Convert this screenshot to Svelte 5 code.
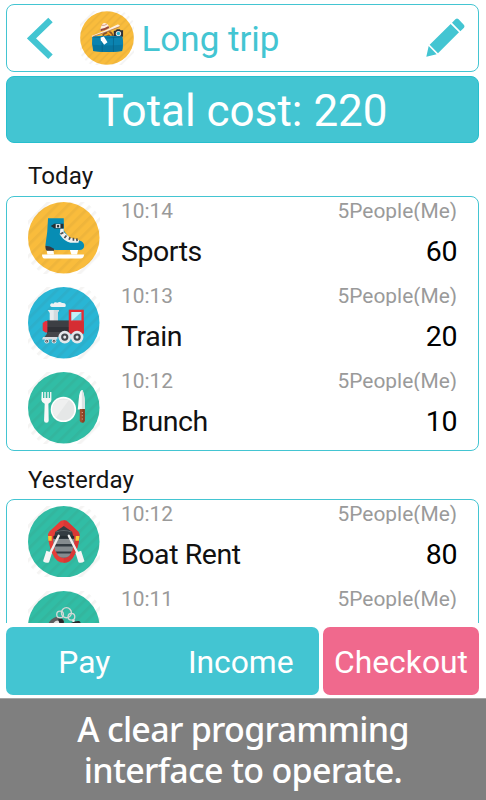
<script>
  const groups = [
    {
      day: 'Today',
      items: [
        { time: '10:14', name: 'Sports', cost: 60, icon: 'skate', color: '#f9bc3c' },
        { time: '10:13', name: 'Train', cost: 20, icon: 'train', color: '#29b6d5' },
        { time: '10:12', name: 'Brunch', cost: 10, icon: 'meal', color: '#31bda5' }
      ]
    },
    {
      day: 'Yesterday',
      items: [
        { time: '10:12', name: 'Boat Rent', cost: 80, icon: 'boat', color: '#31bda5' },
        { time: '10:11', icon: 'rings', color: '#31bda5' }
      ]
    }
  ];
</script>

<svg class="defs" width="0" height="0" aria-hidden="true">
  <defs>
    <pattern id="stripes" width="24" height="24" patternUnits="userSpaceOnUse" patternTransform="rotate(45)">
      <rect width="9" height="24" fill="#5a4a3a" opacity=".06" />
    </pattern>
    <pattern id="stripes-small" width="17" height="17" patternUnits="userSpaceOnUse" patternTransform="rotate(45)">
      <rect width="6" height="17" fill="#5a4a3a" opacity=".06" />
    </pattern>
  </defs>
</svg>

{#snippet art(kind)}
  {#if kind === 'skate'}
    <path d="M66 179h126q-1 12-11 12H73q-7-1-7-12z" fill="#fff" />
    <path d="M80 167h20l2 12H82zM149 165h25l-3 14h-17z" fill="#fff" />
    <path d="M84 71h47l1 38 18 22 28 6q14 4 14 16 0 12-14 13h-70q-21-3-32-14 7-39 8-81z" fill="#078db4" />
    <path d="M76 153q14 0 26 9v6H81q-5-1-5-15z" fill="#38393d" />
    <path d="M121 101h10v11l19 17 27 7-2 8h-24q-18-4-32-25z" fill="#f2f1ef" />
    <path d="M92 94l11-7h27v14h-27z" fill="#253035" />
    <rect x="107" y="88" width="14" height="12" fill="#dce2e4" />
    <rect x="111" y="91" width="6" height="7" fill="#253035" />
    <path d="M121 118l9-5M133 130l6-8M147 135l3-8M160 138v-9M171 139l-1-8" stroke="#4b5054" stroke-width="5" />
  {:else if kind === 'train'}
    <path d="M96 82q-8-1-5-8 3-5 9-2 4-7 12-3 7-5 14 1 11-1 11 7 1 5-7 5z" fill="#eef2f4" />
    <path d="M83 91h34l-4 9v24H89v-24z" fill="#e8ecef" />
    <path d="M101 91h16l-4 9v24h-12z" fill="#d4dade" />
    <rect x="81" y="122" width="67" height="39" fill="#3d3f44" />
    <rect x="81" y="142" width="67" height="19" fill="#303237" />
    <path d="M68 130l8-6h6v34h-6l-8-6z" fill="#e7303d" />
    <path d="M84 157h60v15H74z" fill="#46474b" />
    <path d="M69 172h43v7H66z" fill="#d9dde1" />
    <path d="M146 90h45v72h-45z" fill="#e52d35" />
    <path d="M154 97h30v25h-30z" fill="#62cbe2" /><path d="M154 97h30l-28 25h-2z" fill="#c4eff7" />
    <path d="M147 125h44v35h-44z" fill="#d52d33" />
    {#each [[134,172,19],[171,172,19],[80,184,7],[102,184,7]] as [x,y,r]}
      <circle cx={x} cy={y} {r} fill="#e4e8eb" />
      <circle cx={x} cy={y} r={r * .57} fill="#45494d" /><circle cx={x} cy={y} r={r * .24} fill="#e4e8eb" />
    {/each}
  {:else if kind === 'meal'}
    <path d="M65 82h4v18h4V82h4v18h5V82h4v18h4V82h4v24q-1 9-9 11l1 50q0 7-7 7-7 0-7-7l2-50q-9-3-10-11z" fill="#f7f7f7" />
    <circle cx="130" cy="134" r="38" fill="#fff" /><circle cx="130" cy="134" r="33" fill="#e5e7e7" />
    <path d="M108 158a33 33 0 0 1 5-52l34-1-39 53z" fill="#eff0f0" />
    <path d="M173 134l4-42q4-17 10-16 9 19 7 58z" fill="#fafafa" /><path d="M185 78q2-3 3-1 8 22 6 57h-9z" fill="#dce2e3" />
    <path d="M179 133h15v34q-1 7-8 7-7-1-7-7z" fill="#a24d2c" /><path d="M187 133h7v34q-1 7-7 7z" fill="#854126" />
    <path d="M185 143h3M185 153h3M185 163h3" stroke="#dfb49a" stroke-width="3" />
  {:else if kind === 'boat'}
    <path d="M131 65q9 0 15 7l28 26q5 6 4 14-2 29-13 53-12 27-34 27t-34-27q-11-24-13-53-1-8 4-14l28-26q6-7 15-7z" fill="#e63d38" />
    <path d="M131 65q9 0 15 7l28 26q5 6 4 14-2 29-13 53-12 27-34 27z" fill="#d93735" />
    <path d="M131 82l25 17 6 23q-2 29-13 46-7 9-18 9t-18-9q-11-17-13-46l6-23z" fill="#333c42" />
    <path d="M99 121h64l-1 15h-62zM102 143h58l-4 15h-50zM110 164h42q-6 13-21 13t-21-13z" fill="#858c8f" />
    <path d="M108 100q23-9 46 0" fill="none" stroke="#5d666a" stroke-width="3" />
    <path d="M100 115h62" stroke="#252d32" stroke-width="7" />
    <path d="M84 112h11v14H85zM167 112h11l-2 14h-10z" fill="#f9c734" />
    <path d="M116 111L90 164M146 111l27 53" stroke="#f1f1f1" stroke-width="7" stroke-linecap="round" />
    <path d="M79 156l17 6-9 28q-8 5-18-3zM183 156l-17 6 9 28q8 5 18-3z" fill="#f5f5f5" />
  {:else if kind === 'rings'}
    <path d="M83 123q9-18 24-23 17-2 24 11l-2 30H82z" fill="#5e5e60" />
    <path d="M98 123q4-12 14-13l6 4-2 20H96z" fill="#e0e0e0" />
    <path d="M114 103q14 0 17 10v12h-11z" fill="#29292c" />
    <path d="M146 122q15-11 31-10 6 3 5 14h-36z" fill="#29292c" /><circle cx="160" cy="111" r="4" fill="#eee" />
    <g fill="none" stroke="#d4d9d7" stroke-width="4"><circle cx="139" cy="87" r="15" /><circle cx="120" cy="92" r="10" /><circle cx="154" cy="99" r="10" /></g>
  {/if}
{/snippet}

<div class="screen">
  <header>
    <svg class="back" viewBox="0 0 26 43"><path d="M23.5 3L4.4 21.4l19.1 18.3" fill="none" stroke="#43c5d2" stroke-width="6.4" /></svg>
    <svg class="trip" viewBox="15 17 163 163">
      <circle cx="96.5" cy="98.5" r="81" fill="#f9bc3c" />
      <circle cx="96.5" cy="98.5" r="94" fill="url(#stripes-small)" />
      <path d="M83 88q8-12 26-9l9 13-34 6z" fill="#855027" /><path d="M98 80l12 11M88 92l14-7" stroke="#f6a724" stroke-width="5" />
      <path d="M117 77l6-1 3-4h9l3 3h7v20h-28z" fill="#2f3138" />
      <circle cx="131" cy="85" r="8" fill="#e3e8ea" /><circle cx="131" cy="85" r="5" fill="#27b0cb" />
      <path d="M52 94q45-5 91 0 5 23-1 44-43 6-87 0-6-20-3-44z" fill="#0b83b0" />
      <path d="M54 119q43 4 89 0l-1 19q-43 6-87 0z" fill="#0876a0" />
      <path d="M53 95q44 7 89 0M82 95v45M116 95v45" fill="none" stroke="#075f83" stroke-width="2" />
      <path d="M51 92q38-13 77-34 8-1 7 6-41 17-81 30-5 2-3-2z" fill="#fff0df" />
      <path d="M54 94q40-13 81-30" fill="none" stroke="#a0604a" stroke-width="2" />
      <path d="M76 74q4-20 12-21 9 0 14 10l2 5-26 10z" fill="#fff0df" /><path d="M77 71q12-1 24-9l2 6q-13 8-26 10z" fill="#9b4838" />
      <path d="M80 60q8 2 16-3" fill="none" stroke="#b76551" stroke-width="2" />
      <path d="M77 97l10-3 11 17-10 8-10-14z" fill="#fff" />
    </svg>
    <h1>Long trip</h1>
    <svg class="pencil" viewBox="0 0 117 117" fill="#43c5d2">
      <path d="M11 80L74 18l25 25-63 63zM78 14L89 3q4-3 8 0l17 18q3 4 0 8l-11 11zM8 84l24 25-31 7z" />
    </svg>
  </header>

  <div class="total"><span>Total cost: 220</span></div>

  <main>
    {#each groups as g}
      <h2>{g.day}</h2>
      <section>
        {#each g.items as it}
          <div class="row">
            <svg class="icon" viewBox="24 22 214 214">
              <circle cx="131" cy="129" r="107" fill={it.color} />
              <circle cx="131" cy="129" r="124" fill="url(#stripes)" />
              {@render art(it.icon)}
            </svg>
            <div class="info">
              <div class="meta"><span class="time">{it.time}</span><span class="people">5People(Me)</span></div>
              {#if it.name}
                <div class="entry"><span>{it.name}</span><span class="cost">{it.cost}</span></div>
              {/if}
            </div>
          </div>
        {/each}
      </section>
    {/each}
  </main>

  <nav>
    <div class="pair"><button><span>Pay</span></button><button><span>Income</span></button></div>
    <button class="checkout"><span>Checkout</span></button>
  </nav>

  <footer><div>A clear programming</div><div>interface to operate.</div></footer>
</div>

<style>
  :global(body) { background: #fff; }
  .defs { position: absolute; }
  .screen { width: 486px; height: 800px; overflow: hidden; display: flex; flex-direction: column; font-family: Roboto, sans-serif; box-sizing: border-box; }
  header { box-sizing: border-box; height: 68px; margin: 4px 7px 0 6px; border: 1.5px solid #43c5d2; border-radius: 8px; display: flex; align-items: center; flex: none; }
  .back { width: 26px; height: 43px; margin-left: 20px; }
  .trip { width: 54px; height: 54px; margin-left: 27px; overflow: hidden; }
  h1 { margin: 3px 0 0 7.5px; font-weight: 400; font-size: 35px; line-height: 40px; color: #43c5d2; flex: 1; white-space: nowrap; }
  .pencil { width: 39px; height: 39px; margin: -1px 13.5px 0 0; }
  .total { height: 67px; flex: none; margin: 4px 7px 0 6px; background: #43c5d2; border-radius: 8px; color: #fff; font-size: 44px; line-height: 69px; text-align: center; white-space: nowrap; box-sizing: border-box; border: 1px solid #27bfce; }
  main { height: 480px; flex: none; overflow: hidden; }
  h2 { margin: 0 0 0 28px; height: 52.6px; line-height: 67px; font-size: 24.2px; font-weight: 400; color: #151515; }
  h2:nth-of-type(n + 2) { height: 48px; line-height: 58px; }
  section { margin: 0 7px 0 6px; border: 1.3px solid #43c5d2; border-radius: 8px; box-sizing: border-box; }
  .row { height: 85px; display: flex; align-items: center; padding: 0 21px; box-sizing: border-box; }
  .row:first-child { margin-top: -1px; }
  .row:last-child { height: 85px; margin-bottom: -0.6px; }
  .icon { width: 71.5px; height: 71.5px; flex: none; }
  .info { flex: 1; margin-left: 21.5px; align-self: stretch; }
  .meta { height: 25px; overflow: hidden; display: flex; justify-content: space-between; color: #9a9a9a; font-size: 20.9px; line-height: 30px; }
  .entry { display: flex; justify-content: space-between; font-size: 28.5px; line-height: 34px; margin-top: 14px; color: #111; white-space: nowrap; letter-spacing: -0.45px; }
  .cost { color: #000; }
  nav { height: 68px; flex: none; margin: 4px 7px 0 6px; display: flex; gap: 4px; }
  .pair { flex: 1; display: flex; background: #43c5d2; border-radius: 7px; }
  button { flex: 1; border: 0; padding: 2px 0 0; margin: 0; background: none; color: #fff; font: 400 31.8px Roboto, sans-serif; white-space: nowrap; }
  .checkout { flex: none; width: 156px; background: #f0698d; border-radius: 7px; }
  footer { margin-top: 3px; flex: 1; background: #7f7f7f; border-top: 1px solid #a5a5a5; box-sizing: border-box; color: #fff; text-align: center; font: 500 34px/41px "Noto Sans", sans-serif; letter-spacing: -0.7px; padding-top: 10px; white-space: nowrap; }
</style>
